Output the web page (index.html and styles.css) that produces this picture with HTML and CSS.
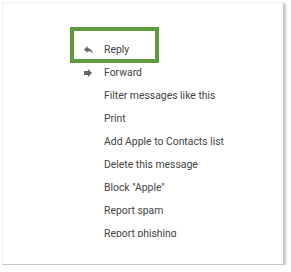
FILE: index.html
```html
<!DOCTYPE html>
<html>
<head>
<meta charset="utf-8">
<link rel="stylesheet" href="styles.css">
</head>
<body>
<div class="card">
  <div class="menu">
    <div class="item item-active">
      <span class="ico"><svg width="9" height="9" viewBox="3 4 18 16"><path d="M10 9V5l-7 7 7 7v-4.1c5 0 8.5 1.6 11 5.1-1-5-4-10-11-11z" fill="#666"/></svg></span>
      <span class="label">Reply</span>
      <span class="highlight"></span>
    </div>
    <div class="item">
      <span class="ico"><svg width="8" height="8" viewBox="4 4 16 16"><path d="M12 8V4l8 8-8 8v-4H4V8z" fill="#666"/></svg></span>
      <span class="label">Forward</span>
    </div>
    <div class="item"><span class="ico"></span><span class="label">Filter messages like this</span></div>
    <div class="item"><span class="ico"></span><span class="label">Print</span></div>
    <div class="item"><span class="ico"></span><span class="label">Add Apple to Contacts list</span></div>
    <div class="item"><span class="ico"></span><span class="label">Delete this message</span></div>
    <div class="item"><span class="ico"></span><span class="label">Block "Apple"</span></div>
    <div class="item"><span class="ico"></span><span class="label">Report spam</span></div>
    <div class="item"><span class="ico"></span><span class="label">Report phishing</span></div>
  </div>
</div>
</body>
</html>
```
FILE: styles.css
```css
html, body {
  margin: 0;
  padding: 0;
  background: #ffffff;
}
body {
  padding: 2px 0 0 2px;
  font-family: Roboto, "Liberation Sans", sans-serif;
}
.card {
  box-sizing: border-box;
  width: 282px;
  height: 263px;
  background: #fff;
  border-top: 1px solid #f0f0f0;
  border-left: 1px solid #f0f0f0;
  border-right: 1px solid #c8c8c8;
  border-bottom: 1px solid #c8c8c8;
  box-shadow: 2px 2px 2px rgba(0, 0, 0, 0.22);
  padding: 35px 0 0 79px;
}
.menu {
  height: 199px;
  clip-path: inset(-30px -30px 0 -30px);
  display: flex;
  flex-direction: column;
}
.item {
  position: relative;
  display: flex;
  align-items: center;
  height: 23px;
  flex: none;
}
.ico {
  width: 12px;
  margin-right: 10px;
  display: flex;
  justify-content: center;
  align-items: center;
}
.label {
  font-size: 10.4px;
  color: #444;
  white-space: nowrap;
}
.highlight {
  position: absolute;
  left: -12px;
  top: -11px;
  width: 89px;
  height: 36px;
  box-sizing: border-box;
  border: 4px solid #5e9b3e;
}
```
